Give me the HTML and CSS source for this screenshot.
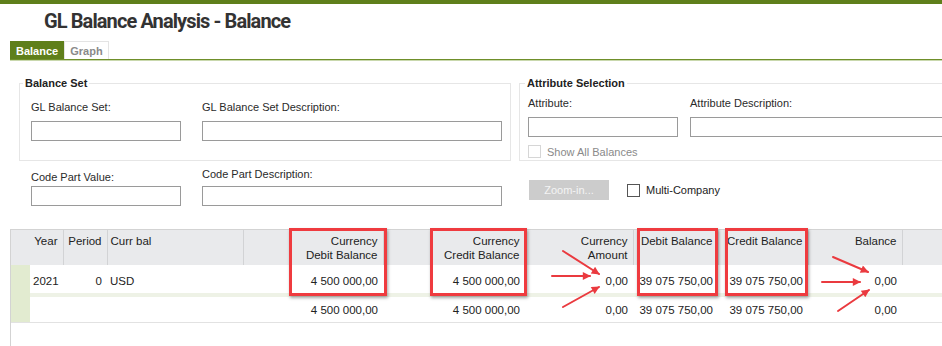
FILE: index.html
```html
<!DOCTYPE html>
<html>
<head>
<meta charset="utf-8">
<link rel="stylesheet" href="styles.css">
</head>
<body>
<div class="page">
  <div class="topbar"></div>
  <h1 class="title">GL Balance Analysis - Balance</h1>
  <div class="tabs">
    <span class="tab active">Balance</span>
    <span class="tab">Graph</span>
  </div>
  <div class="tabline"></div>

  <div class="form">
    <div class="groups">
      <fieldset class="group group-left">
        <legend>Balance Set</legend>
        <div class="fields">
          <div class="field w150">
            <label>GL Balance Set:</label>
            <div class="input"></div>
          </div>
          <div class="field w300">
            <label>GL Balance Set Description:</label>
            <div class="input"></div>
          </div>
        </div>
      </fieldset>
      <fieldset class="group group-right">
        <legend>Attribute Selection</legend>
        <div class="fields attr">
          <div class="field w150">
            <label>Attribute:</label>
            <div class="input"></div>
          </div>
          <div class="field wide">
            <label>Attribute Description:</label>
            <div class="input"></div>
          </div>
        </div>
        <div class="check disabled"><span class="box"></span><span>Show All Balances</span></div>
      </fieldset>
    </div>
    <div class="row2">
      <div class="field w150 cpv">
        <label>Code Part Value:</label>
        <div class="input"></div>
      </div>
      <div class="field w300 cpd">
        <label>Code Part Description:</label>
        <div class="input"></div>
      </div>
      <div class="actions">
        <span class="btn">Zoom-in...</span>
        <div class="check"><span class="box"></span><span>Multi-Company</span></div>
      </div>
    </div>
  </div>

  <div class="grid">
    <table>
      <colgroup>
        <col class="c-ind"><col class="c-year"><col class="c-period"><col class="c-curr">
        <col class="c-cdb"><col class="c-ccb"><col class="c-ca"><col class="c-db">
        <col class="c-cb"><col class="c-bal"><col class="c-rest">
      </colgroup>
      <thead>
        <tr>
          <th class="ind"></th>
          <th class="r">Year</th>
          <th class="r">Period</th>
          <th class="l">Curr bal</th>
          <th class="r">Currency<br>Debit Balance</th>
          <th class="r">Currency<br>Credit Balance</th>
          <th class="r">Currency<br>Amount</th>
          <th class="r">Debit Balance</th>
          <th class="r">Credit Balance</th>
          <th class="r">Balance</th>
          <th class="rest"></th>
        </tr>
      </thead>
      <tbody>
        <tr class="first">
          <td class="ind"></td>
          <td class="l">2021</td>
          <td class="r">0</td>
          <td class="l">USD</td>
          <td class="r">4 500 000,00</td>
          <td class="r">4 500 000,00</td>
          <td class="r">0,00</td>
          <td class="r">39 075 750,00</td>
          <td class="r">39 075 750,00</td>
          <td class="r">0,00</td>
          <td></td>
        </tr>
        <tr class="total">
          <td class="ind"></td>
          <td></td>
          <td></td>
          <td></td>
          <td class="r">4 500 000,00</td>
          <td class="r">4 500 000,00</td>
          <td class="r">0,00</td>
          <td class="r">39 075 750,00</td>
          <td class="r">39 075 750,00</td>
          <td class="r">0,00</td>
          <td></td>
        </tr>
      </tbody>
    </table>
  </div>

  <div class="mark mark-1"></div>
  <div class="mark mark-2"></div>
  <div class="mark mark-3"></div>
  <div class="mark mark-4"></div>

  <svg class="arrows" width="942" height="346" viewBox="0 0 942 346">
    <defs>
      <marker id="ah" viewBox="0 0 10 10" refX="9" refY="5" markerWidth="5" markerHeight="4" orient="auto" markerUnits="strokeWidth">
        <path d="M0 0 L10 5 L0 10 Z" fill="#ea3a3f"/>
      </marker>
    </defs>
    <g stroke="#ea3a3f" stroke-width="2" stroke-linecap="round" marker-end="url(#ah)">
      <line x1="563" y1="251" x2="599" y2="274"/>
      <line x1="552" y1="276" x2="590" y2="276"/>
      <line x1="563" y1="307" x2="599" y2="287"/>
      <line x1="833" y1="257" x2="868" y2="272"/>
      <line x1="822" y1="282" x2="860" y2="282"/>
      <line x1="838" y1="311" x2="869" y2="290"/>
    </g>
  </svg>
</div>
</body>
</html>
```

FILE: styles.css
```css
html, body {
  margin: 0;
  padding: 0;
  background: #fff;
}
body {
  width: 942px;
  height: 346px;
  overflow: hidden;
  font-family: "Liberation Sans", Arial, sans-serif;
  color: #222;
}
.page {
  position: relative;
  width: 942px;
  height: 346px;
  overflow: hidden;
}
.topbar {
  height: 4px;
  background: #5f7f1b;
}
.title {
  margin: 0;
  height: 37px;
  padding-left: 44px;
  font-family: "Roboto", sans-serif;
  font-weight: bold;
  font-size: 20px;
  letter-spacing: -0.9px;
  line-height: 35px;
  color: #333;
}
.tabs {
  display: flex;
  margin-left: 10px;
  height: 18px;
  border-bottom: 1px solid #6f8f2a;
}
.tab {
  display: flex;
  align-items: center;
  height: 17px;
  padding: 0 5px;
  font-size: 11px;
  font-weight: bold;
  color: #8a8a8a;
  border: 1px solid #e4e4e4;
  border-bottom: none;
  background: #fff;
}
.tab.active {
  background: #5f7f1b;
  color: #fff;
  border-color: #5f7f1b;
}
.tabline {
  margin-left: 10px;
  height: 1px;
  background: #c9d8ad;
}

/* form */
.form {
  padding-top: 16px;
  font-size: 11px;
  color: #2a2a2a;
}
.groups {
  display: flex;
  gap: 8px;
  margin-left: 19px;
  width: 1100px;
}
.group {
  margin: 0;
  padding: 0 0 0 3px;
  border: 1px solid #e6e6e6;
  height: 84px;
  box-sizing: border-box;
  min-width: 0;
  flex: none;
}
.group legend {
  padding: 0 2px;
  font-weight: bold;
  font-size: 11px;
  line-height: 13px;
  color: #222;
}
.group-left {
  width: 492px;
}
.group-right {
  width: 520px;
  padding-left: 5px;
}
.fields {
  display: flex;
  gap: 21px;
  padding-left: 8px;
  padding-top: 11px;
}
.fields.attr {
  padding-left: 3px;
  padding-top: 7px;
  gap: 12px;
}
.field {
  display: flex;
  flex-direction: column;
  gap: 7px;
}
.field label {
  height: 13px;
  line-height: 13px;
  white-space: nowrap;
}
.w150 { width: 150px; }
.w300 { width: 300px; }
.wide { width: 300px; }
.input {
  height: 18px;
  border: 1px solid #9a9a9a;
  background: #fff;
}
.check {
  display: flex;
  align-items: center;
  gap: 6px;
  font-size: 11px;
  color: #222;
}
.check .box {
  width: 11px;
  height: 11px;
  border: 1px solid #555;
  background: #fff;
}
.group-right .check {
  margin-top: 8px;
  margin-left: 3px;
}
.check.disabled {
  color: #8a8a8a;
}
.check.disabled .box {
  border-color: #d6d6d6;
}

.row2 {
  display: flex;
  margin-top: 7px;
  padding-left: 31px;
  gap: 21px;
}
.row2 .field {
  gap: 5px;
}
.row2 .cpv label {
  margin-top: 3px;
  margin-bottom: -3px;
}
.actions {
  display: flex;
  align-items: center;
  gap: 18px;
  margin-left: 6px;
  margin-top: 12px;
  height: 20px;
  align-self: flex-start;
}
.btn {
  display: flex;
  align-items: center;
  justify-content: center;
  width: 80px;
  height: 20px;
  background: #cccccc;
  color: #f4f4f4;
  font-size: 11px;
}

/* grid */
.grid {
  margin-top: 23px;
  margin-left: 10px;
  border-left: 1px solid #d3d3d3;
  border-top: 1px solid #d3d3d3;
  height: 200px;
}
table {
  border-collapse: collapse;
  table-layout: fixed;
  width: 959px;
  font-size: 11.5px;
  color: #222;
}
.c-ind { width: 19px; }
.c-year { width: 33px; }
.c-period { width: 44px; }
.c-curr { width: 136px; }
.c-cdb { width: 140px; }
.c-ccb { width: 142px; }
.c-ca { width: 108px; }
.c-db { width: 85px; }
.c-cb { width: 90px; }
.c-bal { width: 94px; }
.c-rest { width: 68px; }
th {
  background: #e9eaec;
  height: 35px;
  padding: 4px 5px 0 3px;
  box-sizing: border-box;
  vertical-align: top;
  font-weight: normal;
  line-height: 14px;
  border-right: 1px solid #d2d3d5;
  white-space: nowrap;
  overflow: hidden;
}
th.ind {
  border-right: none;
}
th.rest {
  border-right: none;
}
.r { text-align: right; }
.l { text-align: left; }
td {
  height: 25px;
  padding: 0 5px 0 3px;
  box-sizing: border-box;
  white-space: nowrap;
  background: #fff;
}
td.ind {
  background: #e2ebd0;
}
tr.first td {
  border-bottom: 4px solid #eef2e6;
  height: 30px;
  padding-top: 3px;
}
tr.first td.ind {
  border-bottom-color: #e2ebd0;
}
tr.total td {
  border-bottom: 1px solid #e2e2e2;
  height: 27px;
  padding-top: 1px;
}

/* annotations */
.mark {
  position: absolute;
  top: 228px;
  height: 68px;
  box-sizing: border-box;
  border: 3px solid #ef3b3f;
  box-shadow: 1px 2px 3px rgba(0, 0, 0, 0.35);
}
.mark-1 { left: 289px; width: 98px; }
.mark-2 { left: 430px; width: 97px; }
.mark-3 { left: 637px; width: 81px; }
.mark-4 { left: 725px; width: 83px; }
.arrows {
  position: absolute;
  left: 0;
  top: 0;
  pointer-events: none;
}
```
